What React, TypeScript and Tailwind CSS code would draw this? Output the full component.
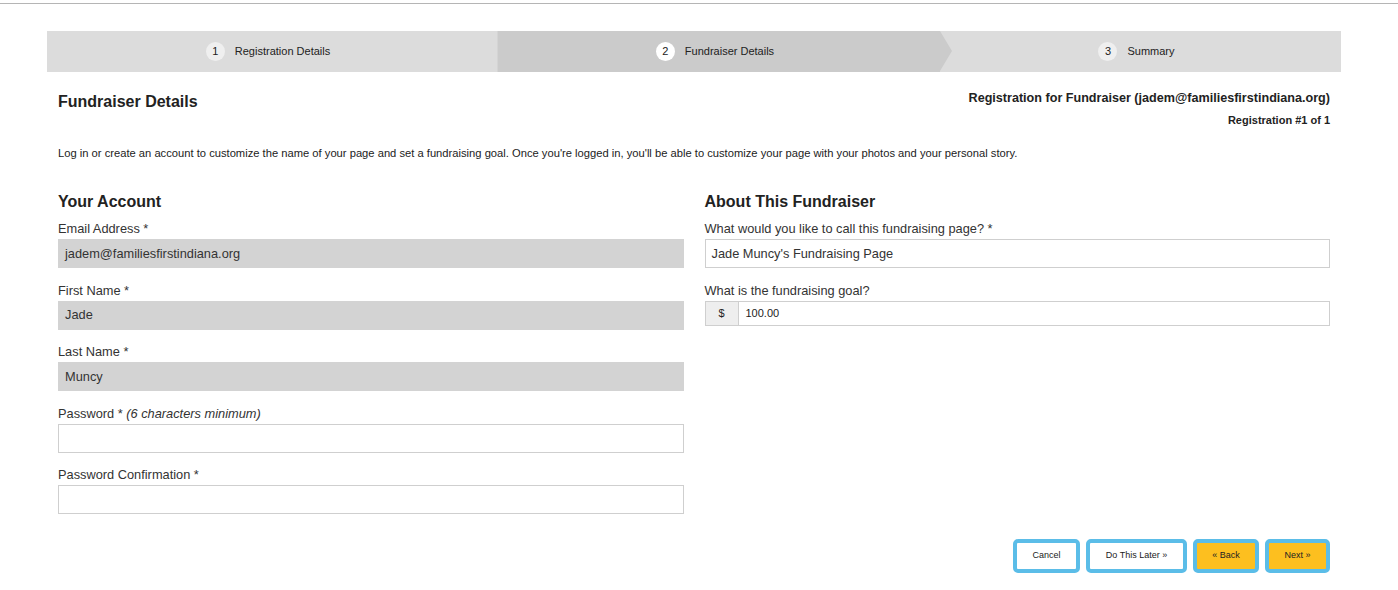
import React from 'react';

interface Step {
  num: number;
  label: string;
  width: string;
  active?: boolean;
}

const steps: Step[] = [
  { num: 1, label: 'Registration Details', width: 'w-[450px]' },
  { num: 2, label: 'Fundraiser Details', width: 'w-[443px]', active: true },
  { num: 3, label: 'Summary', width: 'flex-1' },
];

const Field: React.FC<{ label: React.ReactNode; value?: string; disabled?: boolean }> = ({ label, value, disabled }) => (
  <div className="mb-[14.5px]">
    <div className="text-[12.8px] leading-[16px] text-[#333] mb-[2px]">{label}</div>
    <div
      className={`h-[29px] border flex items-center px-[6px] text-[12.8px] text-[#333] ${
        disabled ? 'bg-[#d3d3d3] border-[#d3d3d3]' : 'bg-white border-[#cfcfcf]'
      }`}
    >
      {value}
    </div>
  </div>
);

const Btn: React.FC<{ children: React.ReactNode; w: string; yellow?: boolean }> = ({ children, w, yellow }) => (
  <button
    className={`${w} h-[34px] rounded-[5px] border-[4px] border-[#5bbde8] text-[9px] text-[#222] flex items-center justify-center ${
      yellow ? 'bg-[#fdbf1f]' : 'bg-white'
    }`}
  >
    {children}
  </button>
);

export default function App() {
  return (
    <div className="w-[1398px] h-[590px] bg-white font-['Liberation_Sans',Arial,sans-serif] text-[#222]">
      <div className="h-[3px]" />
      <div className="h-px bg-[#b5b5b5]" />

      <div className="mx-[47px] w-[1294px] mt-[27px]">
        {/* stepper */}
        <div className="flex h-[41px] bg-[#dcdcdc]">
          {steps.map((s) => (
            <div
              key={s.num}
              className={`${s.width} relative flex items-center justify-center gap-[10px] pr-[8px] text-[11px] ${
                s.active ? 'bg-[#cbcbcb] border-l border-[#d4d4d4]' : ''
              }`}
            >
              <span
                className={`w-[19px] h-[19px] rounded-full flex items-center justify-center text-[11px] ${
                  s.active ? 'bg-white' : 'bg-[#efefef]'
                }`}
              >
                {s.num}
              </span>
              <span>{s.label}</span>
              {s.active && (
                <span className="absolute right-[-12px] top-0 w-0 h-0 border-y-[20.5px] border-y-transparent border-l-[12px] border-l-[#cbcbcb] z-10" />
              )}
            </div>
          ))}
        </div>

        <div className="px-[11px]">
          {/* header row */}
          <div className="flex justify-between items-start mt-[18px]">
            <h1 className="text-[16px] leading-[18px] font-bold text-[#222] mt-[3px]">Fundraiser Details</h1>
            <div className="text-right">
              <div className="text-[12.6px] font-bold leading-[16px]">
                Registration for Fundraiser (jadem@familiesfirstindiana.org)
              </div>
              <div className="text-[11px] leading-[13px] font-bold mt-[8px]">Registration #1 of 1</div>
            </div>
          </div>

          <p className="text-[11.2px] leading-[14px] mt-[19px] text-[#222]">
            Log in or create an account to customize the name of your page and set a fundraising goal. Once you're logged
            in, you'll be able to customize your page with your photos and your personal story.
          </p>

          {/* columns */}
          <div className="grid grid-cols-2 gap-[21px] mt-[32px]">
            <div>
              <h2 className="text-[16px] font-bold text-[#222] leading-[20px] mb-[9px]">Your Account</h2>
              <Field label="Email Address *" value="jadem@familiesfirstindiana.org" disabled />
              <Field label="First Name *" value="Jade" disabled />
              <Field label="Last Name *" value="Muncy" disabled />
              <Field
                label={
                  <>
                    Password * <i>(6 characters minimum)</i>
                  </>
                }
              />
              <Field label="Password Confirmation *" />
            </div>
            <div>
              <h2 className="text-[16px] font-bold text-[#222] leading-[20px] mb-[9px]">About This Fundraiser</h2>
              <Field label="What would you like to call this fundraising page? *" value="Jade Muncy's Fundraising Page" />
              <div className="mb-[14.5px]">
                <div className="text-[12.8px] leading-[16px] text-[#333] mb-[2px]">What is the fundraising goal?</div>
                <div className="flex h-[25px]">
                  <div className="w-[34px] bg-[#eeeeee] border border-[#cfcfcf] flex items-center justify-center text-[11px]">
                    $
                  </div>
                  <div className="flex-1 border border-l-0 border-[#cfcfcf] flex items-center px-[7px] text-[11px]">
                    100.00
                  </div>
                </div>
              </div>
            </div>
          </div>

          {/* buttons */}
          <div className="flex justify-end gap-[6px] mt-[10px]">
            <Btn w="w-[67px]">Cancel</Btn>
            <Btn w="w-[101px]">Do This Later »</Btn>
            <Btn w="w-[66px]" yellow>
              « Back
            </Btn>
            <Btn w="w-[65px]" yellow>
              Next »
            </Btn>
          </div>
        </div>
      </div>
    </div>
  );
}
